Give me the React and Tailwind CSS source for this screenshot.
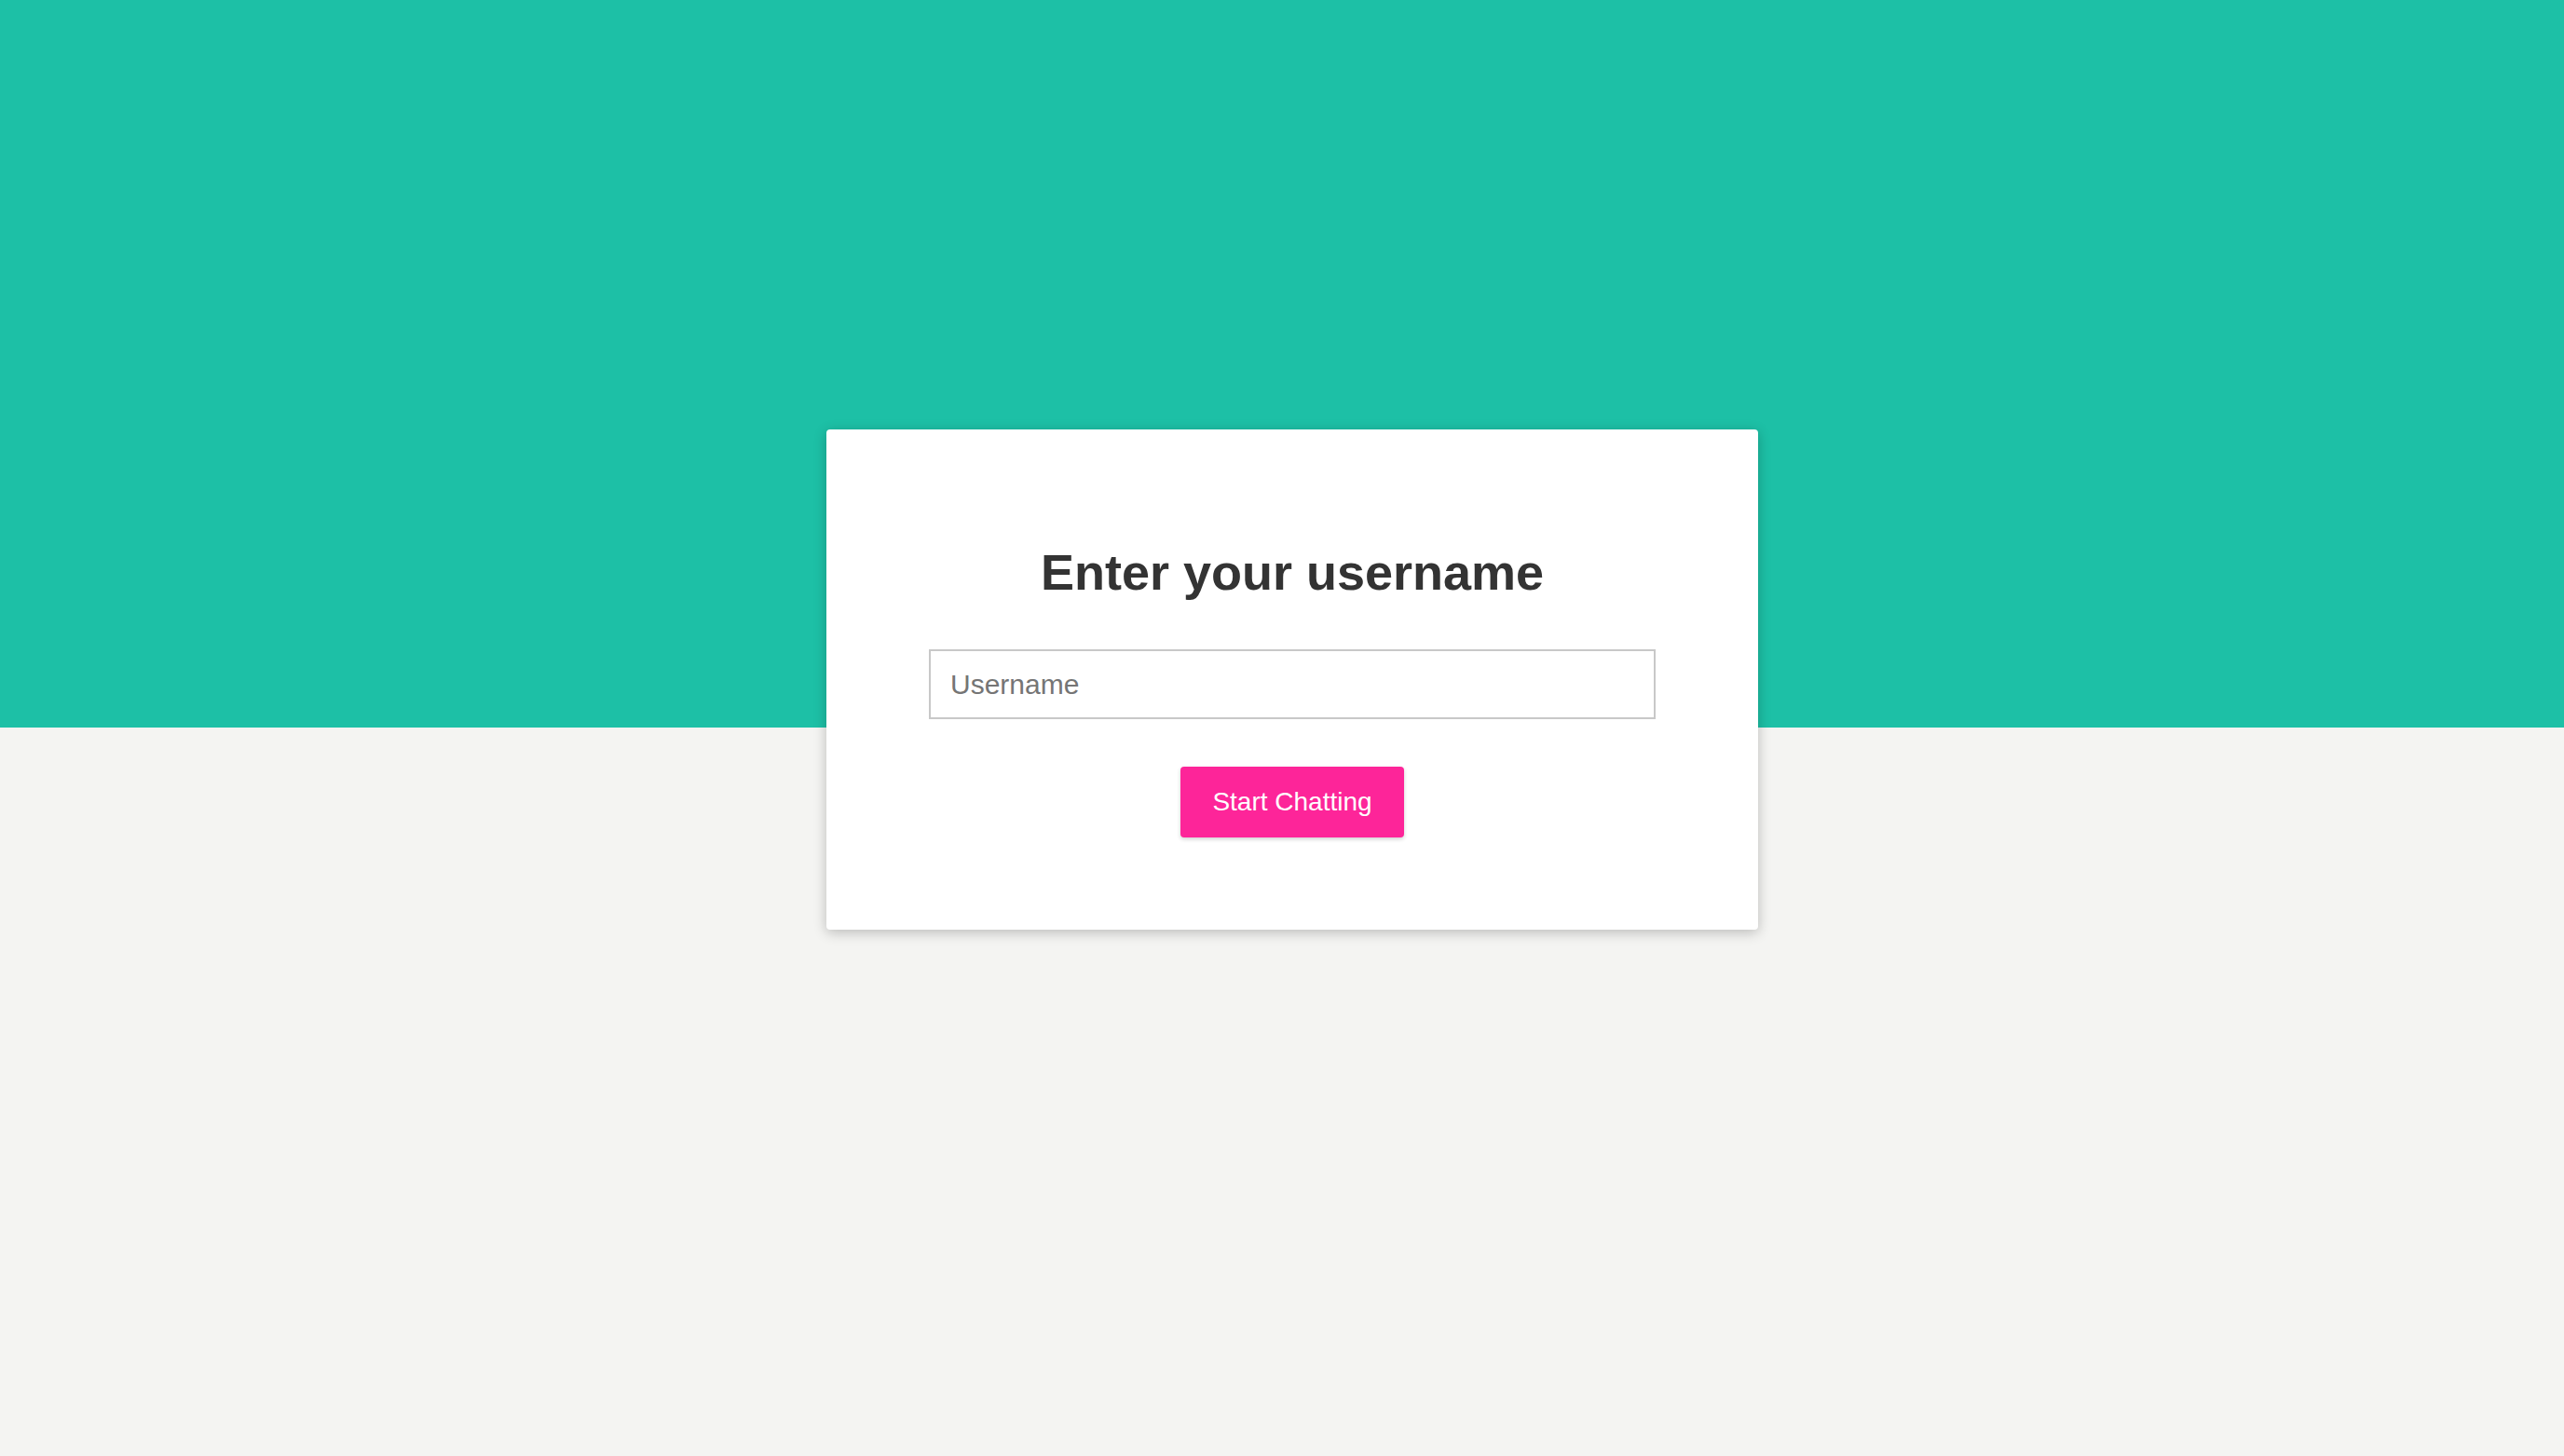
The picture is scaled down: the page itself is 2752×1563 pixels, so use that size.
import { useState } from 'react';

const App = () => {
  const [username, setUsername] = useState('');

  return (
    <div
      className="min-h-screen w-full bg-[linear-gradient(to_bottom,#1dc0a6_781px,#f4f4f2_781px)] flex justify-center pl-[22px] pt-[461px]"
      style={{ fontFamily: '"Liberation Sans", Arial, Helvetica, sans-serif' }}
    >
      <div className="w-[1000px] h-[537px] bg-white rounded-[4px] shadow-[0_3px_14px_rgba(0,0,0,0.24)] flex flex-col items-center pt-[121px] px-[110px]">
        <h1 className="text-[54px] leading-[65px] font-bold text-[#333333]">Enter your username</h1>

        <input
          type="text"
          value={username}
          onChange={e => setUsername(e.target.value)}
          placeholder="Username"
          className="mt-[50px] w-full h-[75px] border-2 border-[#c8c8c8] px-[21px] text-[30px] text-[#333333] placeholder:text-[#757575] outline-none"
        />

        <button className="mt-[51px] w-[240px] h-[76px] bg-[#fd2599] text-white text-[28px] rounded-[4px] shadow-[0_2px_4px_rgba(0,0,0,0.18)]">
          Start Chatting
        </button>
      </div>
    </div>
  );
};

export default App;
